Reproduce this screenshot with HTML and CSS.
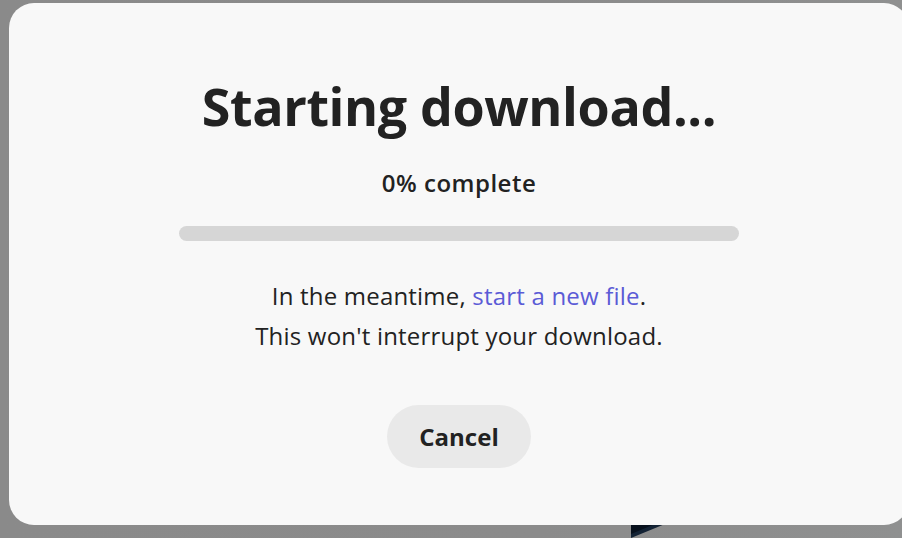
FILE: index.html
```html
<!DOCTYPE html>
<html lang="en">
<head>
<meta charset="utf-8">
<title>Starting download</title>
<link rel="stylesheet" href="styles.css">
</head>
<body>
<div class="backdrop">
  <svg class="bg-shape" width="80" height="20" viewBox="0 0 80 20"><polygon points="0,0 34,0 0,14" fill="#132234"/><polygon points="0,0 24,0 0,10" fill="#07101c"/></svg>
  <div class="dialog">
    <h1 class="title">Starting download...</h1>
    <p class="progress-label">0% complete</p>
    <div class="progress-track"><div class="progress-fill" style="width:0%"></div></div>
    <p class="note">In the meantime, <a class="link" href="#">start a new file</a>.<br>This won't interrupt your download.</p>
    <button class="cancel">Cancel</button>
  </div>
</div>
</body>
</html>
```
FILE: styles.css
```css
html, body {
  margin: 0;
  padding: 0;
}
body {
  width: 902px;
  height: 538px;
  overflow: hidden;
  background: #8a8a8a;
  font-family: "Open Sans", "Noto Sans", sans-serif;
  color: #222222;
}
.backdrop {
  position: relative;
  width: 902px;
  height: 538px;
  padding-top: 3px;
  padding-left: 9px;
  box-sizing: border-box;
  background: linear-gradient(90deg, #8a8a8a 0%, #8b8b8b 60%, #8f9090 100%);
}
.bg-shape {
  position: absolute;
  left: 631px;
  top: 524px;
}
.dialog {
  position: relative;
  width: 900px;
  height: 522px;
  background: #f8f8f8;
  border-radius: 25px;
  display: flex;
  flex-direction: column;
  align-items: center;
  padding-top: 71px;
  box-sizing: border-box;
}
.title {
  margin: 0;
  font-size: 52px;
  line-height: 64px;
  font-weight: 700;
  letter-spacing: -0.4px;
  color: #222222;
}
.progress-label {
  margin: 29px 0 0;
  font-size: 24px;
  line-height: 32px;
  font-weight: 600;
  letter-spacing: 0.5px;
}
.progress-track {
  margin-top: 27px;
  width: 560px;
  height: 15px;
  border-radius: 8px;
  background: #d6d6d6;
  overflow: hidden;
}
.progress-fill {
  height: 100%;
  background: #5c5ce0;
}
.note {
  margin: 35px 0 0;
  font-size: 24px;
  line-height: 40px;
  letter-spacing: 0.2px;
  text-align: center;
  color: #222222;
}
.link {
  color: #5b5bd6;
  text-decoration: none;
}
.cancel {
  margin-top: 49px;
  width: 144px;
  height: 63px;
  border: none;
  border-radius: 32px;
  background: #e9e9e9;
  font-family: "Open Sans", "Noto Sans", sans-serif;
  font-size: 24px;
  font-weight: 700;
  color: #222222;
  padding: 0;
}
```
